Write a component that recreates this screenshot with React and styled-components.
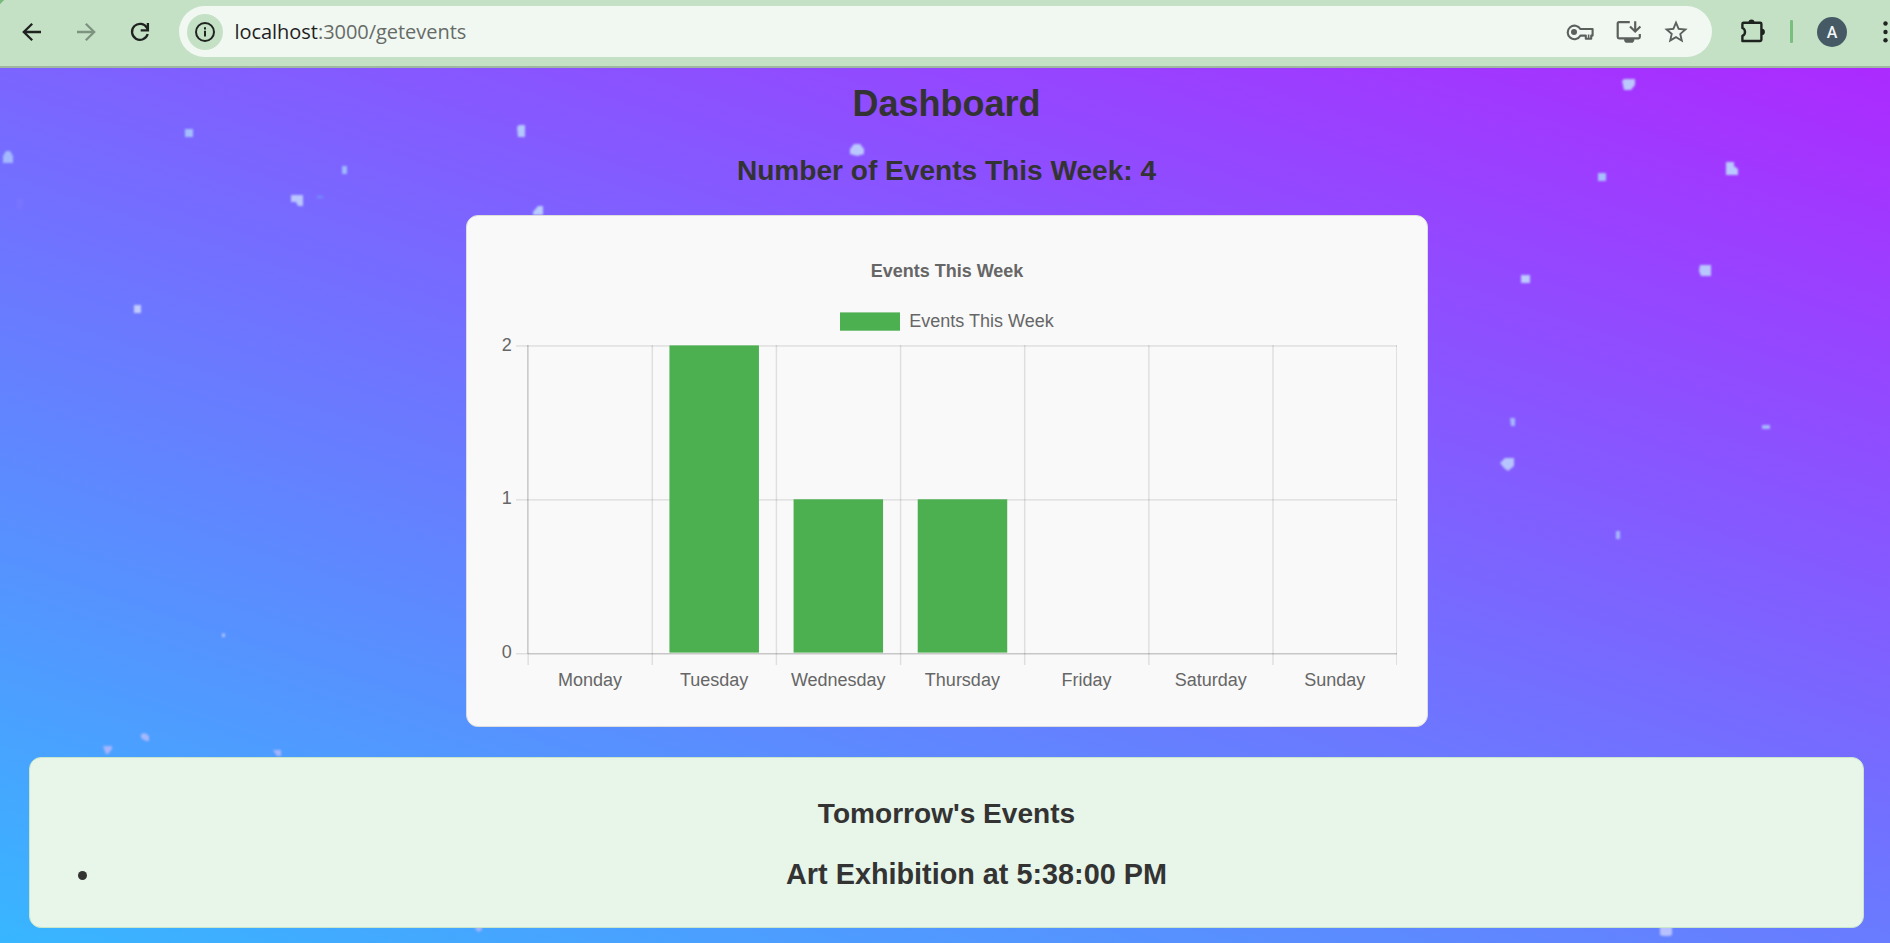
import React from 'react';
import styled, { createGlobalStyle } from 'styled-components';
import { MdStarBorder } from 'react-icons/md';

const GlobalStyle = createGlobalStyle`
  * { box-sizing: border-box; }
  html, body { margin: 0; padding: 0; overflow: hidden; }
  body { font-family: "Liberation Sans", Arial, sans-serif; color: #333; }
`;

const Page = styled.div`
  width: 1890px;
  height: 943px;
  overflow: hidden;
  display: flex;
  flex-direction: column;
`;

const Toolbar = styled.header`
  flex: none;
  height: 68px;
  padding: 0 0 3px 20px;
  display: flex;
  align-items: center;
  background: linear-gradient(135deg, #78b97d 2.5px, #c5e1c5 3.5px);
  border-bottom: 2px solid #9fb7a0;
  overflow: hidden;
  svg { flex: none; display: block; }
`;

const NavButtons = styled.nav`
  display: flex;
  gap: 30px;
`;

const AddressBar = styled.div`
  flex: none;
  width: 1533px;
  height: 51px;
  margin-left: 27px;
  padding: 0 22px 0 8px;
  display: flex;
  align-items: center;
  border-radius: 26px;
  background: #f1f8f2;
`;

const SiteInfo = styled.span`
  width: 36px;
  height: 36px;
  display: flex;
  align-items: center;
  justify-content: center;
  border-radius: 50%;
  background: #c5e1c5;
`;

const Url = styled.span`
  flex: 1;
  margin-left: 11.5px;
  font: 20px/28px "Open Sans", "Noto Sans", sans-serif;
  letter-spacing: -0.04px;
  color: #666b67;
  b { font-weight: 400; color: #1f1f1f; }
`;

const FieldActions = styled.div`
  display: flex;
  align-items: center;
  gap: 19.5px;
  color: #5c605d;
`;

const ExtensionButton = styled.span`
  margin-left: 28px;
`;

const Divider = styled.span`
  flex: none;
  width: 3px;
  height: 23px;
  margin-left: 24px;
  border-radius: 1px;
  background: #7bbf80;
`;

const Avatar = styled.span`
  flex: none;
  width: 30px;
  height: 30px;
  margin: 0 35px 0 24px;
  border-radius: 50%;
  background: #455a64;
  color: #f4f6f7;
  font: 500 16px/31px Roboto, sans-serif;
  text-align: center;
`;

const Main = styled.main`
  position: relative;
  flex: 1;
  padding: 15px 26px 0 29px;
  display: flex;
  flex-direction: column;
  align-items: center;
  background: linear-gradient(18.5deg, #38b6ff, #ac2aff);
`;

const Sparkles = styled.svg`
  position: absolute;
  left: 0;
  top: 0;
`;

const Title = styled.h2`
  position: relative;
  margin: 0;
  font-size: 36px;
  line-height: 42px;
`;

const Subtitle = styled.h3`
  position: relative;
  margin: 30px 0 28px;
  font-size: 28.08px;
  line-height: 32px;
`;

const ChartCard = styled.section`
  position: relative;
  flex: none;
  width: 962px;
  height: 512px;
  border: 1px solid #ddd;
  border-radius: 12px;
  background: #f9f9f9;
  overflow: hidden;
  svg { display: block; }
`;

const ChartText = styled.text`
  font-family: "Liberation Sans", Arial, sans-serif;
  font-size: 18px;
  font-weight: ${(p) => (p.$bold ? 700 : 400)};
  fill: #666;
`;

const EventsCard = styled.section`
  position: relative;
  flex: none;
  align-self: stretch;
  height: 171px;
  margin-top: 30px;
  padding: 40px 30px 0;
  border: 1px solid #c8e6c9;
  border-radius: 12px;
  background: #e8f5e9;
`;

const EventsTitle = styled.h3`
  margin: 0 0 27px;
  font-size: 28.08px;
  line-height: 32px;
  text-align: center;
`;

const EventList = styled.ul`
  list-style: none;
  margin: 0;
  padding: 0;
`;

const EventItem = styled.li`
  display: flex;
  align-items: center;
  font-size: 28.8px;
  font-weight: 700;
  line-height: 34px;
  text-align: center;
  &::before {
    content: "";
    width: 9px;
    height: 9px;
    margin: 3px 33px 0 18px;
    border-radius: 50%;
    background: #333;
  }
  span { flex: 1; }
`;

const INK = '#1f2320';

function Arrow({ forward }) {
  return (
    <svg width="24" height="24" viewBox="0 0 24 24" fill="none" stroke={forward ? '#7d9380' : INK} strokeWidth="2.3">
      <path d={forward ? 'M3 12h17M11.8 3.7l8.4 8.3-8.4 8.3' : 'M21 12H4M12.2 3.7L3.8 12l8.4 8.3'} />
    </svg>
  );
}

function Reload() {
  return (
    <svg width="24" height="24" viewBox="0 0 24 24" fill="none" stroke={INK} strokeWidth="2.3">
      <path d="M19.7 14A8 8 0 1 1 19 7.9L20 9.8" />
      <path d="M19.9 3v7.3h-7.2" />
    </svg>
  );
}

function InfoIcon() {
  return (
    <svg width="22" height="22" viewBox="0 0 22 22" fill="none" stroke={INK} strokeWidth="2">
      <circle cx="11" cy="11" r="9" />
      <path d="M11 9.8v5.8" />
      <path d="M11 6.3v2.1" />
    </svg>
  );
}

function KeyIcon() {
  return (
    <svg width="30" height="24" viewBox="0 0 30 24" fill="none" stroke="currentColor" strokeWidth="2.1">
      <path d="M15.4 9h12.2v6.6h-1.4v3.2h-5.4v-3.2h-5.3A6.8 6.8 0 1 1 15.4 9z" strokeLinejoin="round" />
      <path d="M23.6 14.5v4" strokeWidth="1.6" />
      <circle cx="9" cy="12" r="3" fill="currentColor" stroke="none" />
    </svg>
  );
}

function InstallIcon() {
  return (
    <svg width="28" height="26" viewBox="0 0 28 26" fill="none" stroke="currentColor" strokeWidth="2.2">
      <path d="M14.8 3.2H4q-1.3 0-1.3 1.3V18q0 1.3 1.3 1.3h19.5q1.3 0 1.3-1.3v-2.9" />
      <path d="M20.2 2.2v9.8M15 7.5l5.2 5 5.2-5" />
      <path d="M9.2 20h10v2l-1.5 1.8h-7L9.2 22z" fill="currentColor" stroke="none" />
    </svg>
  );
}

function PuzzleIcon() {
  return (
    <svg width="26" height="28" viewBox="0 0 26 28" fill="none" stroke={INK} strokeWidth="2.4">
      <path d="M3.6 4.7h16.6q1.2 0 1.2 1.2v15.9q0 1.2-1.2 1.2H2.4v-5.1a4.3 4.3 0 0 0 0-7.9V5.9q0-1.2 1.2-1.2z" strokeLinejoin="round" />
      <path d="M8.5 4.4a3 3 0 0 1 6 0zM21.8 10.8a3.1 3.1 0 0 1 0 6.2z" fill={INK} stroke="none" />
    </svg>
  );
}

function MenuDots() {
  return (
    <svg width="7" height="24" viewBox="0 0 7 24" fill={INK}>
      <circle cx="3.5" cy="3.5" r="2.2" />
      <circle cx="3.5" cy="12" r="2.2" />
      <circle cx="3.5" cy="20.3" r="2.2" />
    </svg>
  );
}

// Sparkle outlines in page-area coordinates; "c" is the fill.
const SPARKLES = [
  { d: 'M185 61h8v8h-8z', c: '#a3bfff' },
  { d: 'M3 88l3-5h4l3 5v7H3z', c: '#a3b8ff' },
  { d: 'M517 59l2-2h6v12h-7z', c: '#b3c8ff' },
  { d: 'M342 98h5v8h-5z', c: '#9fb8ff' },
  { d: 'M291 127h12v11h-5l-2-4h-5z', c: '#b9c6ff' },
  { d: 'M134 237h7v8h-7z', c: '#c0ccff' },
  { d: 'M533 144l5-6h5v9h-10z', c: '#b9ccff' },
  { d: 'M850 81l4-5h6l4 5v5l-7 2-7-2z', c: '#bac8ff' },
  { d: 'M1622 13l2-2h11v6l-4 5h-7z', c: '#bcc6ff' },
  { d: 'M1598 105h8v8h-8z', c: '#a8bfff' },
  { d: 'M1726 94h8v4l4 3v6h-12z', c: '#b9c8ff' },
  { d: 'M1521 207h9v8h-9z', c: '#bccaff' },
  { d: 'M1700 197h11v11h-10l-2-5z', c: '#b9c7ff' },
  { d: 'M1510 350h5v8h-4z', c: '#a5b8ff' },
  { d: 'M1762 357h8v4h-8z', c: '#a6b8ff' },
  { d: 'M1500 395l5-5h9v8l-6 5-4-3z', c: '#b7c5ff' },
  { d: 'M1616 463h4v8h-4z', c: '#a5b8ff' },
  { d: 'M222 565.5h3v3.5h-3z', c: '#afc3ff' },
  { d: 'M141 666l4-1 4 3v5h-3l-5-3z', c: '#a6b8fb' },
  { d: 'M103 678h9v3l-4 5h-2z', c: '#a6b5ff' },
  { d: 'M273 682h8v6h-4z', c: '#a6b5ff' },
  { d: 'M474 859h8v3l-4 2z', c: '#a6b5ff' },
  { d: 'M1660 857h12v10l-3 1h-6l-3-1z', c: '#b7c1ff' },
  { d: 'M317 127.500h6v3h-6z', c: '#7585ff' },
  { d: 'M15 131l3 5-3 4 7 1 2-10z', c: '#7874ff' },
];

const DAYS = ['Monday', 'Tuesday', 'Wednesday', 'Thursday', 'Friday', 'Saturday', 'Sunday'];
const COUNTS = [0, 2, 1, 1, 0, 0, 0];
const LEFT = 60.4;
const STEP = 124.14;
const BASE = 437.3;
const UNIT = 153.9;

function EventsChart() {
  return (
    <svg width="960" height="510" viewBox="0 0 960 510">
      <ChartText $bold x="480" y="61" textAnchor="middle">Events This Week</ChartText>
      <rect x="373" y="96.4" width="60" height="18.3" fill="#4caf50" />
      <ChartText x="442.3" y="111">Events This Week</ChartText>
      {[0, 1, 2].map((n) => (
        <g key={n}>
          <rect x="49" y={BASE - n * UNIT - 0.3} width={n ? 881 : 12} height="1.5" fill="rgba(0,0,0,0.1)" />
          <ChartText x="44.8" y={BASE - n * UNIT + 5} textAnchor="end">{n}</ChartText>
        </g>
      ))}
      {Array.from({ length: 8 }, (_, i) => (
        <rect
          key={i}
          x={LEFT + i * STEP - (i === 7 ? 0.4 : 0)}
          y={i ? 129 : 438.5}
          width={i === 7 ? 1 : 1.5}
          height={i ? 320 : 10.5}
          fill="rgba(0,0,0,0.1)"
        />
      ))}
      <rect x={LEFT - 0.3} y="129" width="1.5" height="309" fill="rgba(0,0,0,0.2)" />
      <rect x="61" y={BASE - 0.3} width="869" height="1.5" fill="rgba(0,0,0,0.2)" />
      {COUNTS.map((n, i) =>
        n ? (
          <rect
            key={i}
            x={LEFT + i * STEP + 17.9}
            y={BASE - n * UNIT - 0.1}
            width="89.5"
            height={n * UNIT - 0.6}
            fill="#4caf50"
          />
        ) : null
      )}
      {DAYS.map((day, i) => (
        <ChartText key={day} x={LEFT + (i + 0.5) * STEP + 0.5} y="470" textAnchor="middle">{day}</ChartText>
      ))}
    </svg>
  );
}

export default function App() {
  return (
    <Page>
      <GlobalStyle />
      <Toolbar>
        <NavButtons>
          <Arrow />
          <Arrow forward />
          <Reload />
        </NavButtons>
        <AddressBar>
          <SiteInfo><InfoIcon /></SiteInfo>
          <Url><b>localhost</b>:3000/getevents</Url>
          <FieldActions>
            <KeyIcon />
            <InstallIcon />
            <MdStarBorder size={28} />
          </FieldActions>
        </AddressBar>
        <ExtensionButton><PuzzleIcon /></ExtensionButton>
        <Divider />
        <Avatar>A</Avatar>
        <MenuDots />
      </Toolbar>
      <Main>
        <Sparkles width="1890" height="875" viewBox="0 0 1890 875">
          <defs>
            <filter id="soft" x="-50%" y="-50%" width="200%" height="200%">
              <feGaussianBlur stdDeviation="0.9" />
            </filter>
          </defs>
          {SPARKLES.map((s) => (
            <path key={s.d} d={s.d} fill={s.c} filter="url(#soft)" />
          ))}
        </Sparkles>
        <Title>Dashboard</Title>
        <Subtitle>Number of Events This Week: 4</Subtitle>
        <ChartCard><EventsChart /></ChartCard>
        <EventsCard>
          <EventsTitle>Tomorrow's Events</EventsTitle>
          <EventList>
            <EventItem><span>Art Exhibition at 5:38:00 PM</span></EventItem>
          </EventList>
        </EventsCard>
      </Main>
    </Page>
  );
}
